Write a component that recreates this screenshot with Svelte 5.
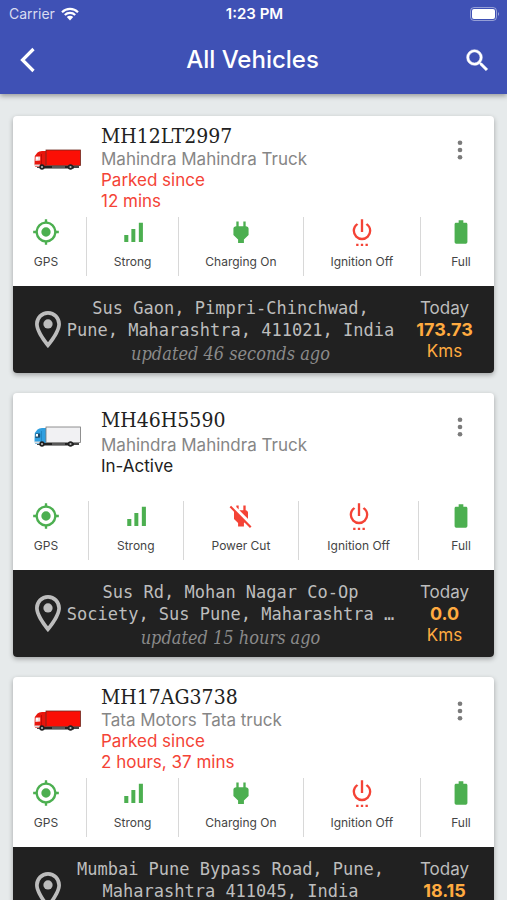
<script>
	let vehicles = [
		{
			plate: "MH12LT2997",
			model: "Mahindra Mahindra Truck",
			status: ["Parked since", "12 mins"],
			active: true,
			power: "Charging On",
			address: "Sus Gaon, Pimpri-Chinchwad, Pune, Maharashtra, 411021, India",
			updated: "updated 46 seconds ago",
			kms: "173.73"
		},
		{
			plate: "MH46H5590",
			model: "Mahindra Mahindra Truck",
			status: ["In-Active"],
			active: false,
			power: "Power Cut",
			address: "Sus Rd, Mohan Nagar Co-Op Society, Sus Pune, Maharashtra …",
			updated: "updated 15 hours ago",
			kms: "0.0"
		},
		{
			plate: "MH17AG3738",
			model: "Tata Motors Tata truck",
			status: ["Parked since", "2 hours, 37 mins"],
			active: true,
			power: "Charging On",
			address: "Mumbai Pune Bypass Road, Pune, Maharashtra 411045, India",
			updated: "",
			kms: "18.15"
		}
	];
</script>

{#snippet truck(active)}
	<svg class="truck" viewBox="0 0 47 21" aria-hidden="true">
		<path d="M3 17h42v2H3z" fill="#444" />
		<path d="M.8 7 3.500 3.500Q5 2 8 2h4v16H1.200L.5 15z" fill={active ? "#e8150c" : "#2f9fe0"} />
		<path d="M1.600 7.500h4.600v4L1.400 12z" fill={active ? "#f4dada" : "#1d4a68"} />
		<path d="M2 8h2v2.500H1.800z" fill="#fff" />
		<path d="M7.500 5v12" stroke={active ? "#a80000" : "#1677b0"} stroke-width=".6" />
		<rect x="12" y="1" width="34.500" height="15.500" fill={active ? "#fb0f05" : "#f1f1f3"} stroke={active ? "#6e2a20" : "#777"} stroke-width=".8" />
		<path d="M1 15.500h5v2H1z" fill="#ddd" />
		<path d="M10 17h30v2.400H10z" fill="#222" />
		<path d="M18 18h13" stroke="#aaa" stroke-width=".8" />
		<circle cx="8" cy="18" r="2.700" fill="#222" /><circle cx="8" cy="18" r="1.100" fill="#bbb" />
		<circle cx="36.500" cy="18" r="2.700" fill="#222" /><circle cx="36.500" cy="18" r="1.100" fill="#bbb" />
	</svg>
{/snippet}

<div class="app">
	<header>
		<div class="status-bar">
			<span class="carrier">
				Carrier
				<svg width="18" height="14" viewBox="0 0 18 14" aria-hidden="true">
					<path d="M1 5.2a11.5 11.5 0 0 1 16 0M3.8 8a7.5 7.5 0 0 1 10.4 0" fill="none" stroke="#fff" stroke-width="2.2" />
					<path d="M5.8 10.1a4.6 4.6 0 0 1 6.4 0L9 13.4z" fill="#fff" />
				</svg>
			</span>
			<span class="time">1:23 PM</span>
			<svg class="phone-battery" width="30" height="14" viewBox="0 0 30 14" aria-hidden="true">
				<rect x=".5" y=".5" width="26" height="13" rx="3.5" fill="none" stroke="#fff" stroke-opacity=".45" />
				<rect x="2" y="2" width="23" height="10" rx="2" fill="#fff" />
				<path d="M28 5q2 2 0 4z" fill="#fff" fill-opacity=".5" />
			</svg>
		</div>
		<div class="toolbar">
			<button aria-label="Back">
				<svg width="28" height="28" viewBox="0 0 28 28"><path d="M19.5 3 8.500 14l11 11" fill="none" stroke="#fff" stroke-width="3.2" /></svg>
			</button>
			<h1>All Vehicles</h1>
			<button aria-label="Search">
				<svg width="29" height="29" viewBox="0 0 24 24" fill="#fff" stroke="#fff" stroke-width=".4"><path d="M15.500 14h-.79l-.28-.27A6.470 6.470 0 0 0 16 9.500 6.500 6.500 0 1 0 9.500 16c1.610 0 3.090-.59 4.230-1.570l.27.28v.79l5 4.990L20.490 19zm-6 0C7.010 14 5 11.990 5 9.500S7.010 5 9.500 5 14 7.010 14 9.500 11.990 14 9.500 14z" /></svg>
			</button>
		</div>
	</header>

	<main>
		{#each vehicles as vehicle}
			<article class="card">
				<div class="info" class:inactive={!vehicle.active}>
					{@render truck(vehicle.active)}
					<div class="details">
						<h2>{vehicle.plate}</h2>
						<p class="model">{vehicle.model}</p>
						{#each vehicle.status as line}
							<p class="state">{line}</p>
						{/each}
					</div>
					<button class="more" aria-label="More options">
						<svg width="28" height="28" viewBox="0 0 24 24" fill="#7b7b7b"><circle cx="12" cy="5.800" r="2" /><circle cx="12" cy="12" r="2" /><circle cx="12" cy="18.200" r="2" /></svg>
					</button>
				</div>

				<div class="stats">
					<div class="stat">
						<svg viewBox="0 0 24 24"><path d="M12 8a4 4 0 1 0 0 8 4 4 0 0 0 0-8zm8.940 3A8.994 8.994 0 0 0 13 3.060V1h-2v2.060A8.994 8.994 0 0 0 3.060 11H1v2h2.060A8.994 8.994 0 0 0 11 20.940V23h2v-2.060A8.994 8.994 0 0 0 20.940 13H23v-2zM12 19a7 7 0 1 1 0-14 7 7 0 0 1 0 14z" /></svg>
						<span>GPS</span>
					</div>
					<div class="divider"></div>
					<div class="stat">
						<svg viewBox="0 0 24 24"><path d="M4.500 14.500h3.500V20.500H4.500zM10.600 9.500H14v11h-3.400zM17 4h3.500v16.500H17z" /></svg>
						<span>Strong</span>
					</div>
					<div class="divider"></div>
					<div class="stat">
						{#if vehicle.active}
							<svg viewBox="0 0 24 24"><path d="M16.010 7 16 3h-2v4h-4V3H8v4h-.010C6.500 6.990 5.500 7.990 5.500 8.990v5.490L9.500 18.500v3h5v-3l4-4.010v-5.500c0-1-1-2-2.490-1.990z" /></svg>
						{:else}
							<svg class="red" viewBox="0 0 24 24"><path d="M18 14.490v-5.500c0-1-1-2-2-2V3h-2v4h-3.400l7.070 7.070zM10 6.350V3H8v1.350zM3.500 3.200 2.200 4.500 6 8.300v6.190L9.500 18v3h5v-3l.5-.5 4.700 4.700 1.300-1.300z" /></svg>
						{/if}
						<span>{vehicle.power}</span>
					</div>
					<div class="divider"></div>
					<div class="stat">
						<svg class="red" viewBox="0 0 24 24"><path d="M7 22h2v2H7zm4 0h2v2h-2zm4 0h2v2h-2zM13 1h-2v11h2zm3.560 3.440-1.450 1.450A5.969 5.969 0 0 1 18 11a6 6 0 0 1-12 0c0-2.170 1.160-4.060 2.880-5.120L7.440 4.440A7.961 7.961 0 0 0 4 11a8 8 0 0 0 16 0c0-2.720-1.360-5.120-3.440-6.560z" /></svg>
						<span>Ignition Off</span>
					</div>
					<div class="divider"></div>
					<div class="stat">
						<svg viewBox="0 0 24 24"><path d="M16.200 4H14V2h-4v2H7.800C7 4 6.500 4.600 6.500 5.330v15.330c0 .74.5 1.340 1.300 1.340h8.400c.74 0 1.300-.6 1.300-1.330V5.330C17.500 4.600 17 4 16.200 4z" /></svg>
						<span>Full</span>
					</div>
				</div>

				<footer>
					<svg class="pin" viewBox="5 2 14 20" aria-hidden="true"><path fill-rule="evenodd" d="M12 2C8.130 2 5 5.130 5 9c0 5.250 7 13 7 13s7-7.750 7-13c0-3.870-3.130-7-7-7zM7 9a5 5 0 0 1 10 0c0 2.880-2.880 7.190-5 9.880C9.920 16.210 7 11.850 7 9z" /><circle cx="12" cy="9" r="2.500" /></svg>
					<div class="place">
						<p class="address">{vehicle.address}</p>
						<p class="updated">{vehicle.updated}</p>
					</div>
					<div class="today">
						<p>Today</p>
						<p class="orange"><b>{vehicle.kms}</b></p>
						<p class="orange">Kms</p>
					</div>
				</footer>
			</article>
		{/each}
	</main>
</div>

<style>
	:global(body) {
		margin: 0;
		background: #e6eaeb;
	}
	.app {
		display: flex;
		flex-direction: column;
		height: 100vh;
		font-family: Inter, "Liberation Sans", sans-serif;
		font-size: 17px;
		line-height: 21px;
		color: #212121;
	}
	h1, h2, p {
		margin: 0;
	}
	button {
		border: none;
		background: none;
		padding: 0;
		cursor: pointer;
	}
	svg {
		display: block;
	}
	header {
		z-index: 1;
		background: #3f51b5;
		color: white;
		box-shadow: 0 2px 5px rgba(0, 0, 0, 0.35);
	}
	.status-bar {
		display: grid;
		grid-template-columns: 1fr auto 1fr;
		align-items: center;
		height: 27px;
		padding: 0 7px 0 9px;
		font-size: 14px;
	}
	.carrier {
		display: flex;
		align-items: center;
		gap: 6px;
		color: #d9dcf0;
	}
	.time {
		font-size: 15px;
		font-weight: 600;
	}
	.phone-battery {
		justify-self: end;
	}
	.toolbar {
		display: flex;
		align-items: center;
		justify-content: space-between;
		height: 66px;
		padding: 0 15px 1px 14px;
	}
	h1 {
		font-size: 24px;
		font-weight: 500;
		line-height: 32px;
	}
	main {
		flex: 1;
		min-height: 0;
		overflow-y: auto;
		scrollbar-width: none;
		padding: 22px 13px;
	}
	.card {
		margin-bottom: 20px;
		border-radius: 4px;
		overflow: hidden;
		background: white;
		box-shadow: 0 2px 5px rgba(0, 0, 0, 0.3);
	}
	.info {
		display: flex;
		align-items: flex-start;
		padding: 7px 20px 5px 21px;
	}
	.truck {
		width: 47px;
		height: 21px;
		margin-top: 26px;
	}
	.details {
		flex: 1;
		padding-left: 20px;
	}
	h2 {
		font-family: "DejaVu Serif Condensed", "DejaVu Serif", serif;
		font-size: 21px;
		font-weight: 400;
		line-height: 26px;
	}
	.model {
		color: #868686;
	}
	.state {
		color: #f44336;
	}
	.more {
		margin-top: 13px;
	}
	.inactive .details {
		padding-top: 7px;
		padding-bottom: 19px;
	}
	.inactive h2 {
		padding-bottom: 2px;
	}
	.inactive .state {
		color: #212121;
	}
	.stats {
		display: flex;
		justify-content: space-between;
		padding: 0 19px 10px;
	}
	.stat {
		display: flex;
		flex-direction: column;
		align-items: center;
		gap: 7px;
		font-size: 12px;
		line-height: 18px;
		color: #444;
	}
	.stat svg {
		width: 28px;
		height: 28px;
		margin-top: 1px;
		fill: #4caf50;
	}
	.stat svg.red {
		fill: #f44336;
	}
	.divider {
		width: 1px;
		height: 59px;
		background: #d8d8d8;
	}
	footer {
		display: flex;
		align-items: center;
		min-height: 87px;
		background: #212121;
		color: #bdbdbd;
		text-align: center;
	}
	.pin {
		flex: none;
		width: 26px;
		height: 37px;
		margin-left: 22px;
		fill: #bdbdbd;
	}
	.place {
		flex: 1;
		padding: 4px 0 0 5px;
	}
	.address {
		font-family: "DejaVu Sans Mono", "Liberation Mono", monospace;
		font-size: 17px;
		line-height: 22px;
	}
	.updated {
		min-height: 26px;
		font-family: "DejaVu Serif Condensed", "DejaVu Serif", serif;
		font-size: 18px;
		font-style: italic;
		line-height: 26px;
		color: #8a8a8a;
	}
	.today {
		width: 99px;
	}
	.orange {
		color: #ffab40;
	}
	.orange b {
		font-size: 18px;
	}
</style>
